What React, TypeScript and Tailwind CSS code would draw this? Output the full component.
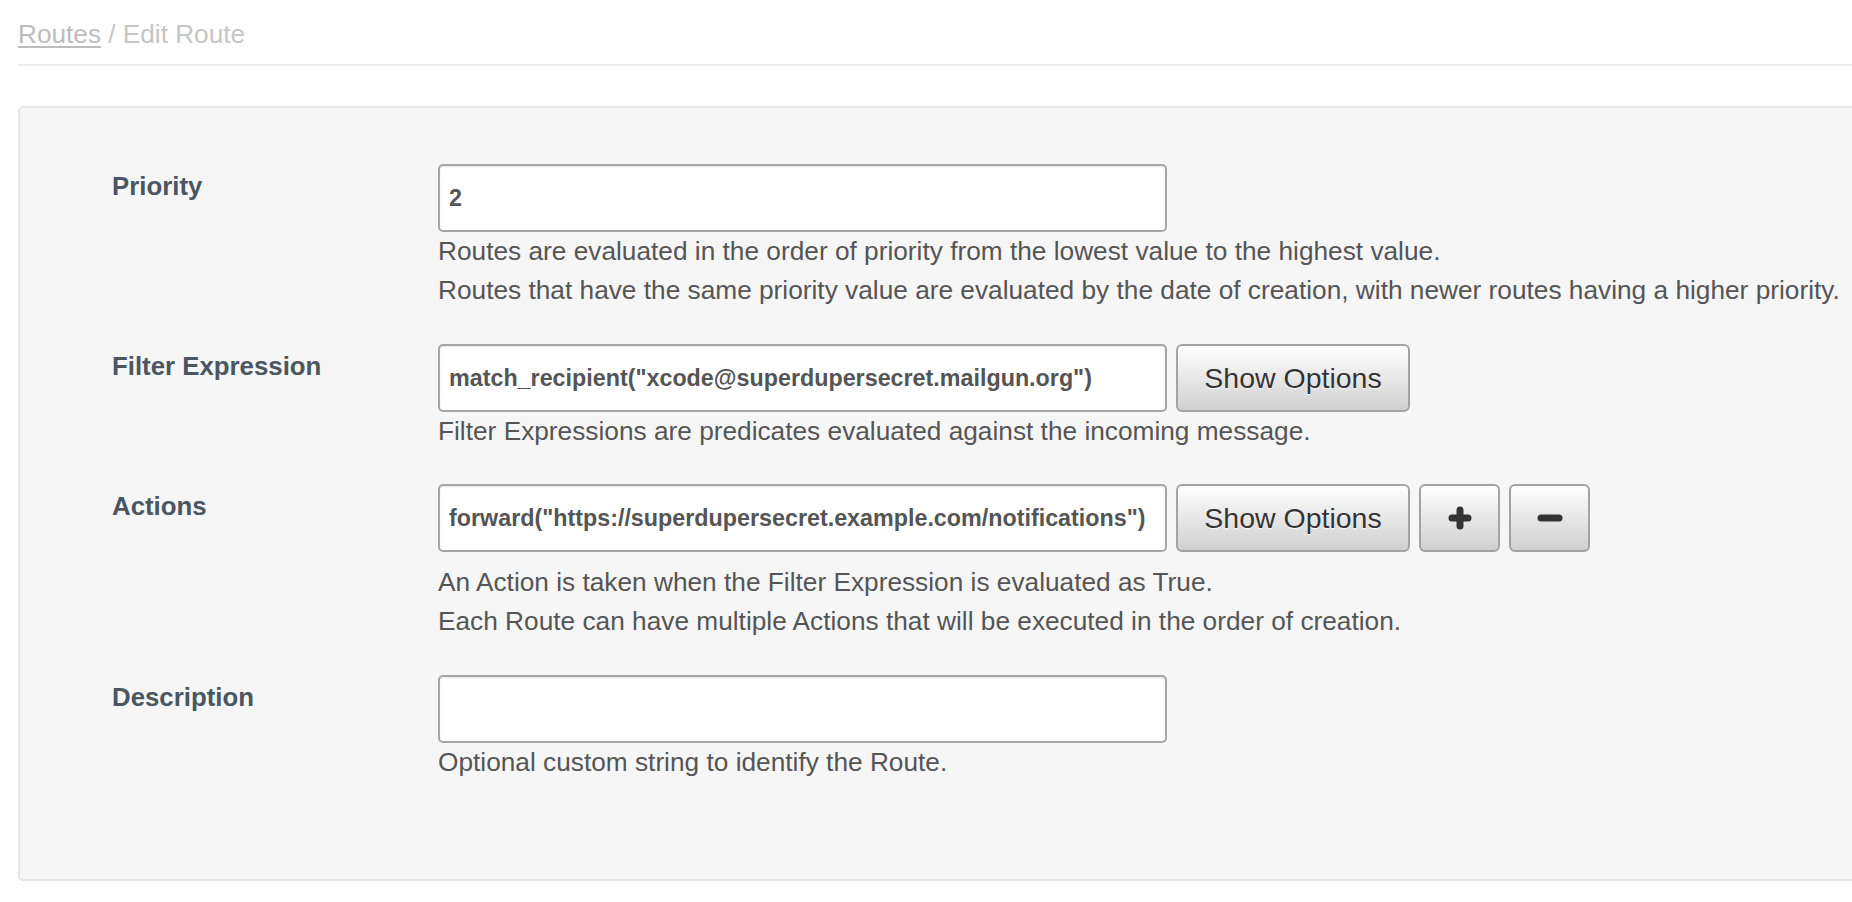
import React from "react";

const inputCls =
  "h-[68px] w-[729px] shrink-0 rounded-[5px] border-2 border-[#a6a6a6] bg-white px-[9px] text-[23.3px] font-bold text-[#555] outline-none shadow-[inset_0_1px_2px_rgba(0,0,0,0.1)]";
const btnCls =
  "h-[68px] shrink-0 rounded-[6px] border-2 border-[#a3a3a3] bg-gradient-to-b from-white to-[#d0d0d0] text-[28.5px] text-[#333] [text-shadow:0_1px_1px_rgba(255,255,255,0.9)] flex items-center justify-center";

function Label({ children }: { children: React.ReactNode }) {
  return (
    <div className="w-[326px] shrink-0 pt-[3px] text-[25.8px] font-bold leading-[39px] text-[#4b5661]">
      {children}
    </div>
  );
}

function Help({ children }: { children: React.ReactNode }) {
  return <div className="text-[26.25px] leading-[39px] text-[#555]">{children}</div>;
}

function PlusIcon() {
  return (
    <svg width="24" height="24" viewBox="0 0 24 24">
      <path d="M12 4v16M4 12h16" stroke="#333" strokeWidth="7" strokeLinecap="round" />
    </svg>
  );
}
function MinusIcon() {
  return (
    <svg width="26" height="10" viewBox="0 0 26 10">
      <path d="M4 5h18" stroke="#333" strokeWidth="7" strokeLinecap="round" />
    </svg>
  );
}

export default function App() {
  return (
    <div
      className="min-h-[902px] w-full overflow-hidden bg-white"
      style={{ fontFamily: '"Helvetica Neue", "Liberation Sans", Arial, sans-serif' }}
    >
      <div className="pl-[18px]">
        <div className="pt-[16px] pb-[12px] text-[26.2px] leading-[36px] text-[#c6c6c6]">
          <span className="underline decoration-[2px] underline-offset-[3px] text-[#bdbdbd]">Routes</span>
          <span> / Edit Route</span>
        </div>
        <div className="h-[2px] bg-[#ececec]" />
        <div className="mt-[40px] w-[1900px] rounded-[5px] border-2 border-[#e6e6e6] bg-[#f6f6f6] pl-[92px] pt-[56px] pb-[97px]">
          {/* Priority */}
          <div className="flex">
            <Label>Priority</Label>
            <div className="flex flex-col">
              <input className={inputCls} defaultValue="2" />
              <Help>Routes are evaluated in the order of priority from the lowest value to the highest value.</Help>
              <Help>
                Routes that have the same priority value are evaluated by the date of creation, with newer routes having a higher priority.
              </Help>
            </div>
          </div>
          {/* Filter */}
          <div className="mt-[34px] flex">
            <Label>Filter Expression</Label>
            <div className="flex flex-col">
              <div className="flex gap-[9px]">
                <input className={inputCls} defaultValue={'match_recipient("xcode@superdupersecret.mailgun.org")'} />
                <button className={btnCls + " w-[234px]"}>Show Options</button>
              </div>
              <Help>Filter Expressions are predicates evaluated against the incoming message.</Help>
            </div>
          </div>
          {/* Actions */}
          <div className="mt-[33px] flex">
            <Label>Actions</Label>
            <div className="flex flex-col">
              <div className="flex gap-[9px]">
                <input className={inputCls} defaultValue={'forward("https://superdupersecret.example.com/notifications")'} />
                <button className={btnCls + " w-[234px]"}>Show Options</button>
                <button className={btnCls + " w-[81px]"}>
                  <PlusIcon />
                </button>
                <button className={btnCls + " w-[81px]"}>
                  <MinusIcon />
                </button>
              </div>
              <div className="mt-[11px]">
                <Help>An Action is taken when the Filter Expression is evaluated as True.</Help>
                <Help>Each Route can have multiple Actions that will be executed in the order of creation.</Help>
              </div>
            </div>
          </div>
          {/* Description */}
          <div className="mt-[34px] flex">
            <Label>Description</Label>
            <div className="flex flex-col">
              <input className={inputCls} defaultValue="" />
              <Help>Optional custom string to identify the Route.</Help>
            </div>
          </div>
        </div>
      </div>
    </div>
  );
}
